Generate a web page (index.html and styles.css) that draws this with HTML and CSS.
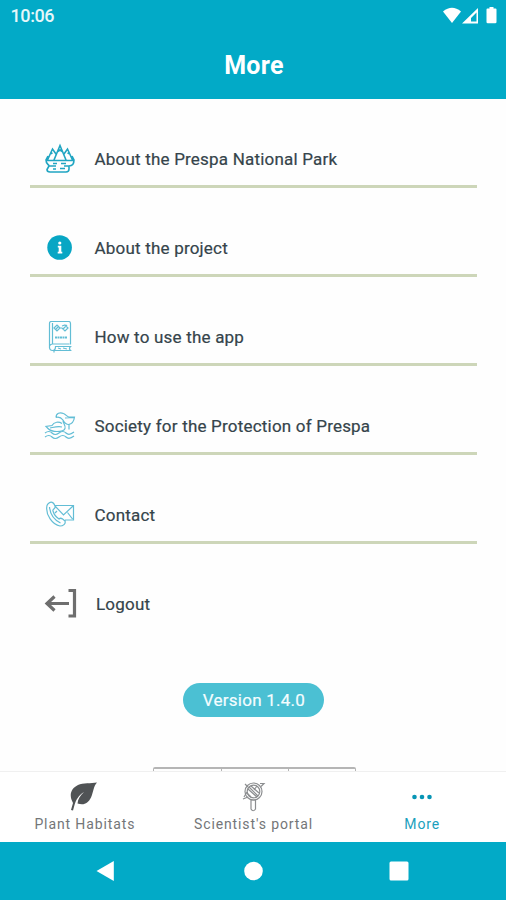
FILE: index.html
```html
<!DOCTYPE html>
<html lang="en">
<head>
<meta charset="utf-8">
<title>More</title>
<link rel="stylesheet" href="styles.css">
</head>
<body>
<header class="header">
  <div class="status">
    <span class="clock">10:06</span>
    <svg class="status-icons" width="56" height="20" viewBox="0 0 56 20" fill="#fff">
      <path d="M1 5.500Q10 -2 19 5.500L10 17Z"/>
      <path fill-rule="evenodd" d="M20 17.500L36 2V17.500ZM29 15.500H34.500V6.500L29 12Z"/>
      <path d="M47.500 1h4v1.500h2q1 0 1 1V16q0 1.300-1.300 1.300h-7.400q-1.300 0-1.300-1.300V3.500q0-1 1-1h2z"/>
    </svg>
  </div>
  <h1 class="title">More</h1>
</header>
<main class="menu">
  <div class="row">
    <svg class="icon" width="32" height="32" viewBox="0 0 32 32">
      <path d="M10 17L16 2.500 22 17M13 9l3-2 3 2M3.500 17L8.500 6l3.500 5M6 11l2.500-1M28.500 17L23.500 6 20 11M26 11l-2.500-1M2 17.500H30M4 13l-2 4c0 5 3 4 3 6h7M28 13l2 4c0 5-3 6-5 6h-5M5 23l-2 3.500c0 2 1 2.500 3 2.500h16c2 0 3-1 3-3v-3M9 20.500h4M17 20.500h5M9 26h3M16 25.500h5"/>
    </svg>
    <span class="label">About the Prespa National Park</span>
  </div>
  <div class="row">
    <svg class="icon" width="32" height="32" viewBox="0 0 32 32">
      <circle class="solid" cx="15.600" cy="15.500" r="12.300"/>
      <circle class="white" cx="15.800" cy="11" r="1.600"/><path class="white" d="M13.800 13.700h3.500v6h1v1.800h-4.600v-1.800h1v-4.200h-.9z"/>
    </svg>
    <span class="label">About the project</span>
  </div>
  <div class="row">
    <svg class="icon thin" width="32" height="32" viewBox="0 0 32 32">
      <path d="M5.500 27V2.500q0-2 2-2h17q2 0 2 2v21M8.500 2v21M5.500 26q0 3.500 3 3.500t3-4h15q-2 2 0 4H9M10 30v1.500M5.500 25q1-2 3-2h17M14 27l3 1M19 27l4 1"/>
      <path d="M10 7l3-3 3 3-3 3zM18 5l3-1 3 3-3 3-3-3M12 8l3-3M19 8l4-4M16 7h2"/>
      <path class="bold" d="M11 16.500h12"/>
    </svg>
    <span class="label">How to use the app</span>
  </div>
  <div class="row">
    <svg class="icon thin" width="32" height="32" viewBox="0 0 32 32">
      <path d="M12 7.500c0-4.500 4-5.500 7.500-4 2.500 1 3.500 3.500 5.500 3.500h5.500c-.5 4-2 7-6 7.500-3 0-4-2-5.500-4.500-2-2.500-4-3.500-7-2.500M19 10.500c0 3 3 5 2 8-1 3-5 3-8 3-5 0-7-1-9-3l-2-2 6-1c2-4 7-4 10-2M6 18c5-1 8-2 12-1M21 8l9-.5M25 14.500v5"/>
      <path d="M1 23q4-3 7 0t7 0 7 0 8-1M1 27q4-3 7 0t7 0 7 0 8-1"/>
    </svg>
    <span class="label">Society for the Protection of Prespa</span>
  </div>
  <div class="row">
    <svg class="icon thin" width="32" height="32" viewBox="0 0 32 32">
      <path d="M5 4c3-2 5 0 6 3 1 3-3 3-2 5 1 4 3 6 6 8 2-2 4 0 6 2 1 3-2 5-5 5C9 26 1 16 3 6.500q.5-1.500 2-2.500zM5.500 8q1 11 11 16M11 6.500h18.500v14.500H21M11 7l8.500 9L29 7M11 14l2-2M23.500 13.500l5 6.500"/>
    </svg>
    <span class="label">Contact</span>
  </div>
  <div class="row logout">
    <svg class="icon" width="34" height="32" viewBox="0 0 34 32">
      <path d="M24.500 2.500H30.500V28H24.500M25 15.500H4M10.500 8.500l-7.500 7 7.500 7"/>
    </svg>
    <span class="label">Logout</span>
  </div>
  <div class="version"><span>Version 1.4.0</span></div>
  <div class="logos"><i></i><i></i><i></i></div>
</main>
<nav class="tabs">
  <div class="tab">
    <svg width="30" height="32" viewBox="0 0 30 32"><path fill="#505355" d="M28 .5C24.500 4 24.500 10 22 15.500c-3 6-7 8-13.500 6C9 17 11 14 15 10 9.500 13.500 7 18 5.500 23L4 28.500l-2-.5L4 21C-.5 13 2 6.500 9 3 14 .8 22 1.500 28 .5z"/></svg>
    <span>Plant Habitats</span>
  </div>
  <div class="tab">
    <svg width="30" height="32" viewBox="0 0 30 32" fill="none" stroke="#8c8e90" stroke-width="1.200"><circle cx="15.500" cy="9.500" r="8.500"/><circle cx="15.500" cy="9.500" r="6.300"/><path d="M13 18v9q2 3.500 4.500 0v-9zM5 17l5-2M7 2l3 3M11 5l9 9M10 7l9 8M13 4l8 7M9 11l4 4M19 4l-3 4M22 1.500h4l-3 3M6 15l3-5"/></svg>
    <span>Scientist's portal</span>
  </div>
  <div class="tab active">
    <svg width="30" height="32" viewBox="0 0 30 32" fill="#0795b5"><circle cx="7.500" cy="15" r="2.300"/><circle cx="15" cy="15" r="2.300"/><circle cx="22.500" cy="15" r="2.300"/></svg>
    <span>More</span>
  </div>
</nav>
<footer class="system">
  <svg width="22" height="24" viewBox="0 0 22 24"><path d="M1.500 12L18.800 2V22Z"/></svg>
  <svg width="22" height="24" viewBox="0 0 22 24"><circle cx="11.500" cy="12" r="9.300"/></svg>
  <svg width="22" height="24" viewBox="0 0 22 24"><rect x="1.500" y="2.500" width="19" height="19" rx="1.500"/></svg>
</footer>
</body>
</html>
```
FILE: styles.css
```css
* { box-sizing: border-box; }
body {
  margin: 0;
  height: 900px;
  display: flex;
  flex-direction: column;
  overflow: hidden;
  background: #fefefe;
  font-family: Roboto, "Liberation Sans", sans-serif;
}
.header { height: 98.500px; flex: none; background: #02aac7; color: #fff; }
.status { display: flex; justify-content: space-between; padding: 6px 8px 0 10.500px; height: 40px; }
.clock { font-size: 18px; line-height: 20px; letter-spacing: -0.400px; color: #e6f7fa; font-weight: 500; }
.title { margin: 12px 0 0; text-align: center; font-size: 25px; line-height: 28px; font-weight: 700; letter-spacing: 0.300px; padding-left: 2px; }
.menu { flex: 1; min-height: 0; padding: 0 29px 0 30px; overflow: hidden; }
.row { height: 89px; display: flex; align-items: flex-end; padding: 0 0 11px 14px; border-bottom: 3px solid #cdd6b9; }
.row:first-child { height: 89.500px; }
.icon { flex: none; width: 32px; fill: none; stroke: #20a5c2; stroke-width: 1.600; position: relative; top: 1px; }
.icon.thin { stroke-width: 1.200; stroke: #62bdd5; }
.icon .solid { fill: #08a6c4; stroke: none; }
.icon .white { fill: #fff; stroke: none; }
.icon .bold { stroke-width: 2; stroke-dasharray: 2 0.500; }
.label { margin-left: 18.500px; font-size: 17px; line-height: 32px; letter-spacing: 0.200px; color: #35444b; -webkit-text-stroke: 0.200px; white-space: nowrap; position: relative; top: 1px; }
.row.logout { border: 0; height: 86px; }
.logout .icon { width: 34px; stroke: #6e6e6e; stroke-width: 3.200; }
.logout .label { margin-left: 18px; }
.version { width: 141px; height: 34px; margin: 52.500px 0 0 153px; border-radius: 17px; background: #4bc0d3; color: #f4fdff; display: flex; align-items: center; justify-content: center; font-size: 17px; letter-spacing: 0.250px; line-height: 34px; padding: 1px 0 0 1px; -webkit-text-stroke: 0.200px; }
.logos { width: 203px; height: 10px; margin: 50.500px 0 0 123px; display: grid; grid-template-columns: repeat(3, 1fr); border: 1px solid #b5b5b5; border-width: 2px 1px 0; border-radius: 2px 2px 0 0; }
.logos i + i { border-left: 1px solid #b5b5b5; }
.tabs { height: 71.500px; flex: none; border-top: 1px solid #f0f0f0; background: #fff; display: grid; grid-template-columns: repeat(3, 1fr); }
.tab { display: flex; flex-direction: column; align-items: center; color: #747678; padding-top: 10px; }
.tab svg { flex: none; }
.tab span { font-size: 14px; line-height: 18px; letter-spacing: 0.880px; margin-top: 1px; padding-left: 1px; white-space: nowrap; }
.tab.active span { color: #1b9fbd; }
.system { height: 58px; flex: none; background: #02aac7; display: flex; justify-content: space-between; padding: 17px 96px 0 95px; }
.system svg { fill: #fff; }
```
